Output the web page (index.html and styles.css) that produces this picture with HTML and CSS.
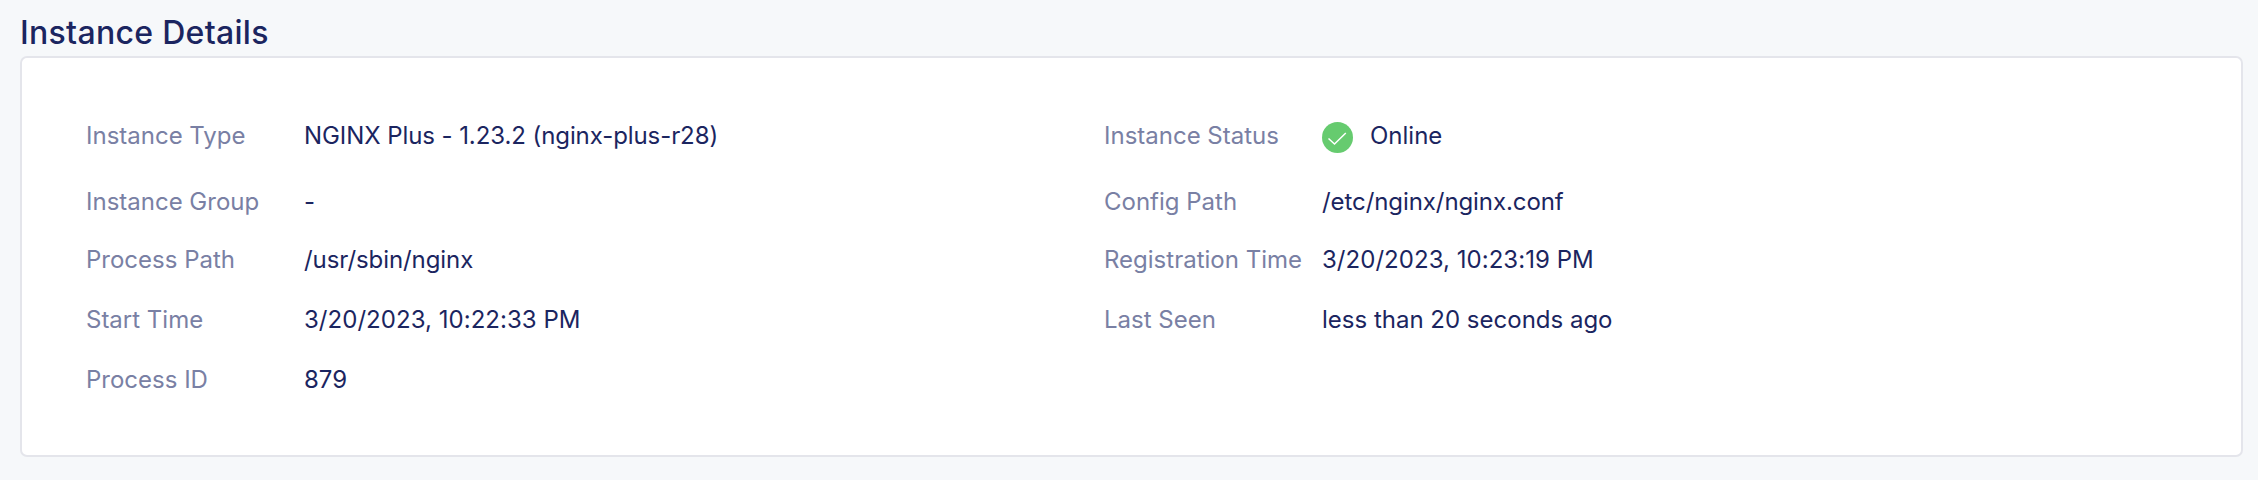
FILE: index.html
```html
<!DOCTYPE html>
<html lang="en">
<head>
<meta charset="utf-8">
<title>Instance Details</title>
<link rel="stylesheet" href="styles.css">
</head>
<body>
<main class="page">
<h1 class="title">Instance Details</h1>
<section class="card">
<dl class="details">
<div class="row row-first"><dt>Instance Type</dt><dd class="tight">NGINX Plus - 1.23.2 (nginx-plus-r28)</dd></div>
<div class="row row-second"><dt>Instance Group</dt><dd>-</dd></div>
<div class="row"><dt>Process Path</dt><dd class="tight">/usr/sbin/nginx</dd></div>
<div class="row"><dt>Start Time</dt><dd class="date">3/20/2023, 10:22:33 PM</dd></div>
<div class="row"><dt>Process ID</dt><dd>879</dd></div>
</dl>
<dl class="details">
<div class="row row-first"><dt>Instance Status</dt><dd class="status"><svg class="status-icon" viewBox="0 0 31 31"><circle cx="15.5" cy="15.5" r="15.5" fill="#66cb6f"/><path d="M6.5 16.5l6 5.5L23.8 11" fill="none" stroke="#fff" stroke-width="1.5"/></svg><span>Online</span></dd></div>
<div class="row row-second"><dt>Config Path</dt><dd class="tight">/etc/nginx/nginx.conf</dd></div>
<div class="row"><dt>Registration Time</dt><dd class="date">3/20/2023, 10:23:19 PM</dd></div>
<div class="row"><dt>Last Seen</dt><dd>less than 20 seconds ago</dd></div>
</dl>
</section>
</main>
</body>
</html>
```
FILE: styles.css
```css
body {
  margin: 0;
  background: #f6f8fa;
  color: #1b2560;
  font-family: Inter, sans-serif;
}
.page {
  box-sizing: border-box;
  height: 480px;
  padding: 8px 15px 0 20px;
}
.title {
  margin: 0;
  height: 48px;
  font-size: 32px;
  font-weight: 500;
  line-height: 50px;
  letter-spacing: 0.3px;
}
.card {
  box-sizing: border-box;
  height: 401px;
  display: grid;
  grid-template-columns: 1018px 1fr;
  padding: 60px 64px 0;
  background: #fff;
  border: 2px solid #e4e5eb;
  border-radius: 7px;
}
.details {
  margin: 0;
}
.row {
  display: grid;
  grid-template-columns: 218px 1fr;
  align-items: center;
  height: 60px;
  font-size: 24px;
  line-height: 36px;
  white-space: nowrap;
}
.row-first {
  height: 56px;
  align-items: start;
}
.row-second {
  height: 56px;
}
.row dt {
  color: #7980a4;
}
.row dd {
  margin: 0;
}
.row .tight {
  letter-spacing: -0.08px;
}
.row .date {
  letter-spacing: 0.04px;
}
.status {
  display: flex;
  align-items: flex-start;
  gap: 17px;
}
.status-icon {
  width: 31px;
  height: 31px;
  margin-top: 4px;
}
```
